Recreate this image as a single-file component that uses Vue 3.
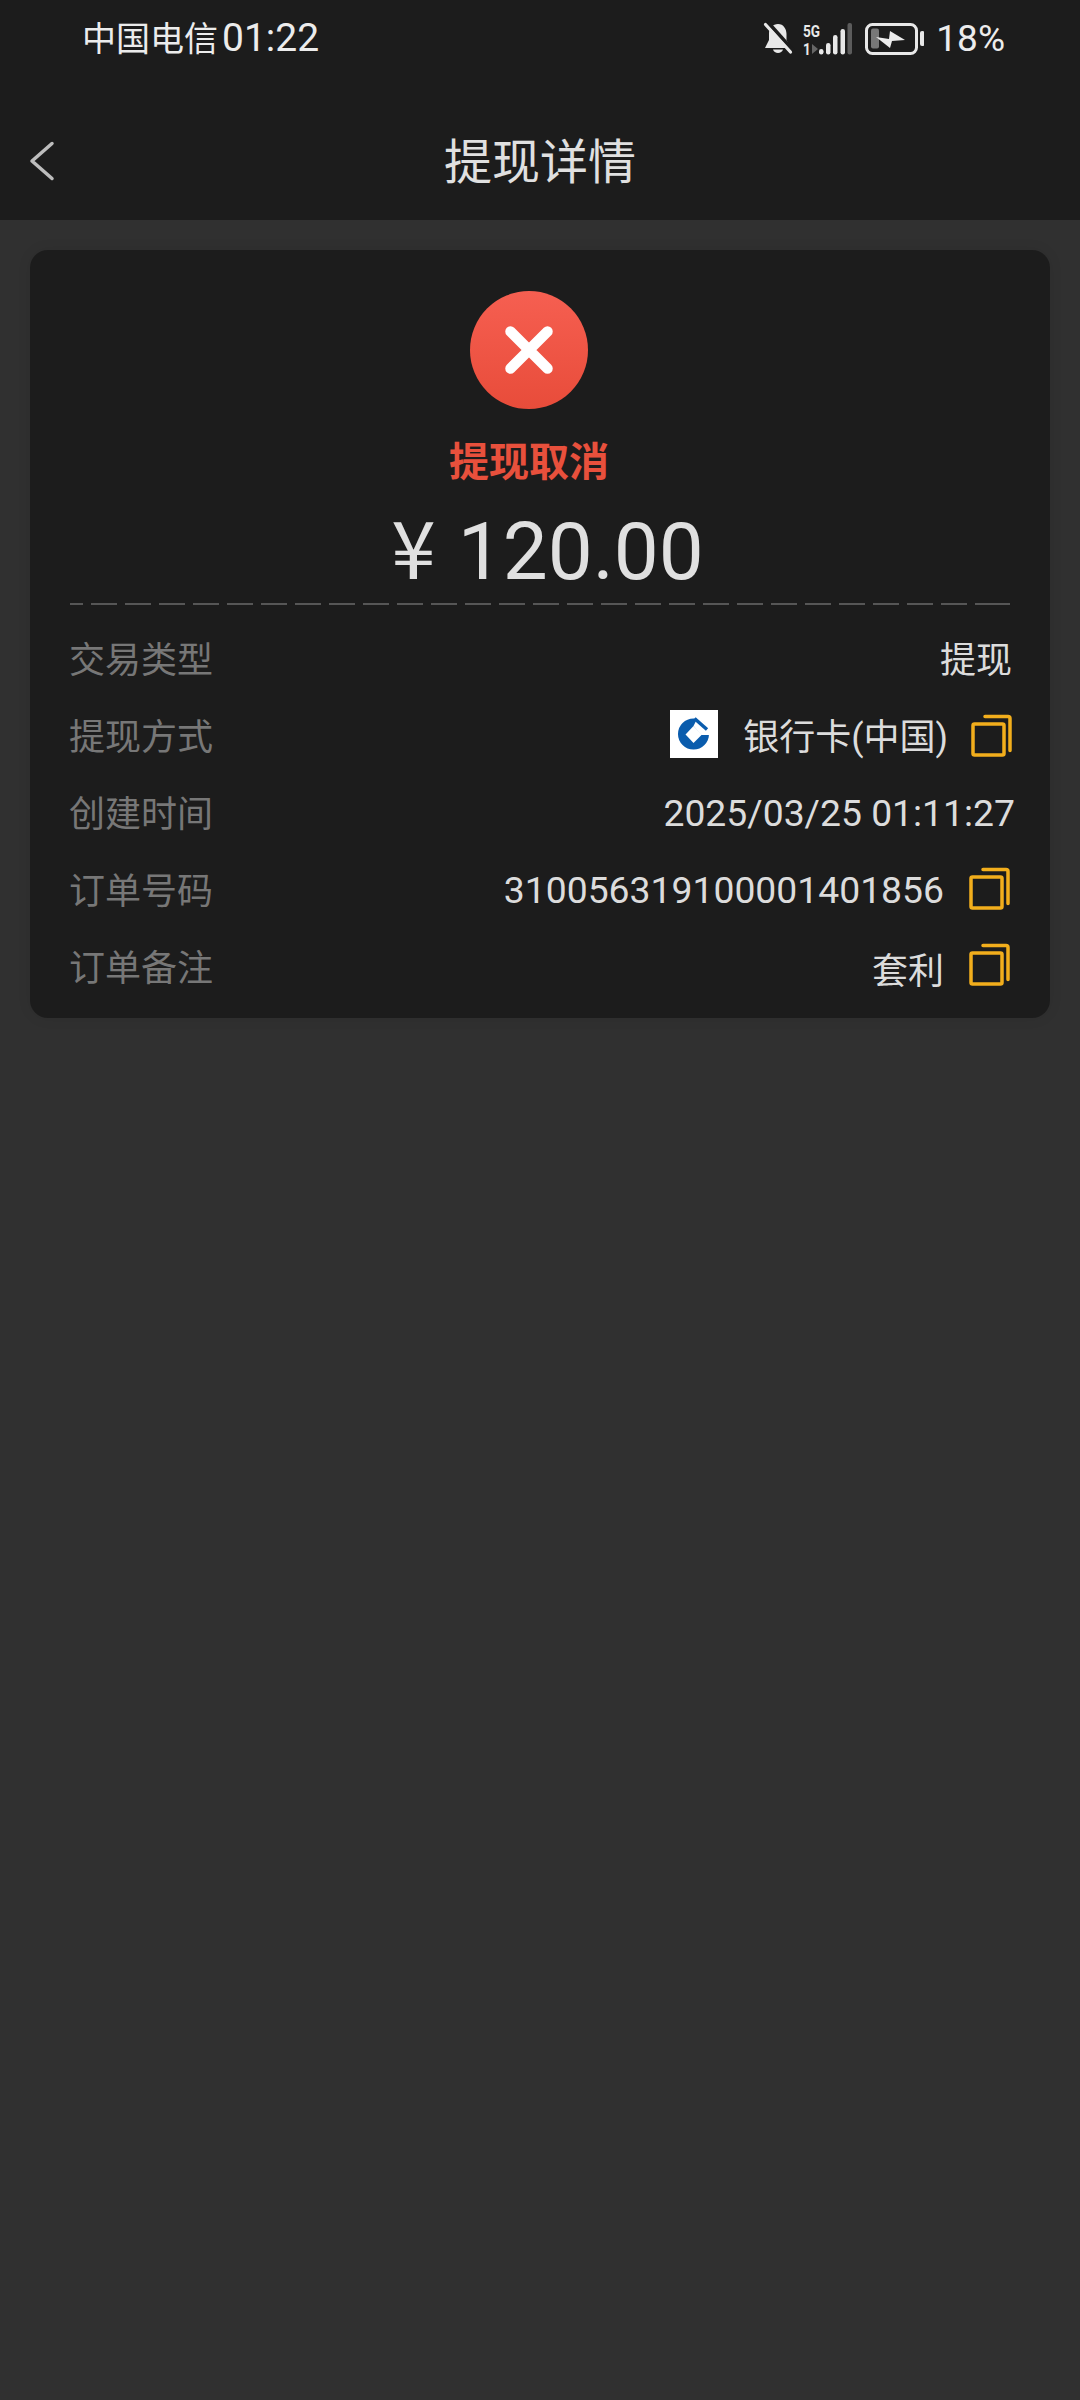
<template>
  <div class="page">
    <header class="top">
      <div class="status-bar">
        <div class="carrier">中国电信<span class="clock">01:22</span></div>
        <div class="status-right">
          <svg class="status-icons" width="162" height="44" viewBox="0 0 162 44">
            <!-- muted bell -->
            <path d="M16 8c5.500 0 8.500 5 8.500 10v6l4 8H3l4-8v-7c0-5 4-9 9-9z" fill="#e8e8e8" />
            <path d="M11 33.500c1 4.500 9 4.500 10 0z" fill="#e8e8e8" />
            <path d="M6 6.500l25 28" stroke="#1c1c1c" stroke-width="4" />
            <path d="M3.500 8.500l25 27.500" stroke="#e8e8e8" stroke-width="3.200" stroke-linecap="round" />
            <!-- network -->
            <text class="net" transform="translate(41 21) scale(.8 1)" x="0" y="0">5G</text>
            <text class="net" transform="translate(41 38.500) scale(.8 1)" x="0" y="0">1</text>
            <path d="M50 28l6 5-6 5z" fill="#666" />
            <rect x="57" y="33" width="4.500" height="5.500" rx="2.200" fill="#e8e8e8" />
            <rect x="64" y="27" width="4.500" height="11.500" rx="2.200" fill="#e8e8e8" />
            <rect x="71" y="19" width="4.500" height="19.500" rx="2.200" fill="#e8e8e8" />
            <rect x="78.500" y="13" width="4.500" height="25.500" rx="2.200" fill="#e8e8e8" />
            <rect x="85.500" y="7" width="4.500" height="31.500" rx="2" fill="#5c5c5c" />
            <!-- battery charging -->
            <rect x="104.500" y="8.500" width="50" height="29" rx="6" fill="none" stroke="#e8e8e8" stroke-width="3" />
            <rect x="109" y="12.500" width="8" height="20" rx="2" fill="#777" />
            <path d="M114 21l13 2 1-8 15 9-13 1-2 7z" fill="#ececec" />
            <rect x="158" y="15" width="4.500" height="15" rx="2" fill="#e8e8e8" />
          </svg>
          <span class="battery">18%</span>
        </div>
      </div>
      <nav class="nav">
        <svg class="back" width="28" height="40" viewBox="0 0 28 40">
          <path d="M24 2.500L4 20l20 17.500" fill="none" stroke="#bdbdbd" stroke-width="3.500" stroke-linecap="round" stroke-linejoin="round" />
        </svg>
        <h1 class="title">提现详情</h1>
      </nav>
    </header>

    <section class="card">
      <div class="result-icon">
        <svg width="48" height="48" viewBox="0 0 48 48">
          <path d="M5.500 5.500l37 37M42.500 5.500l-37 37" stroke="#fff" stroke-width="10.500" stroke-linecap="round" />
        </svg>
      </div>
      <div class="result-text">提现取消</div>
      <div class="amount"><span class="yen">¥</span>120.00</div>
      <div class="dash"></div>

      <div v-for="row in rows" :key="row.label" class="row">
        <span class="label">{{ row.label }}</span>
        <span class="value">
          <!-- bank logo -->
          <svg v-if="row.bank" class="bank" width="48" height="48" viewBox="0 0 48 48">
            <rect width="48" height="48" fill="#fff" />
            <circle cx="23.500" cy="24" r="15.500" fill="#0a5cad" />
            <path d="M23.500 16L28 7l14 12v6H31.500z" fill="#fff" />
            <path d="M24.500 8.500L37 19.500" stroke="#0a5cad" stroke-width="3.500" />
            <path d="M23.500 16l8.500 8.500-8.500 8.500-8-8.500z" fill="#fff" />
          </svg>
          <span class="value-text" :class="row.cls">{{ row.value }}</span>
          <svg v-if="row.copy" class="copy" :class="row.copyCls" width="41" height="43" viewBox="0 0 41 43">
            <rect x="2" y="10" width="31" height="31" rx="1.500" fill="none" stroke="#f2ae1c" stroke-width="3.500" />
            <path d="M14 2.500h23a2 2 0 0 1 2 2v32" fill="none" stroke="#f2ae1c" stroke-width="3.500" stroke-linecap="round" />
          </svg>
        </span>
      </div>
    </section>
  </div>
</template>

<script setup>
const rows = [
  { label: "交易类型", value: "提现", cls: "type" },
  { label: "提现方式", value: "银行卡(中国)", bank: true, copy: true, copyCls: "copy-bank" },
  { label: "创建时间", value: "2025/03/25 01:11:27", cls: "num date" },
  { label: "订单号码", value: "310056319100001401856", cls: "num", copy: true },
  { label: "订单备注", value: "套利", copy: true, cls: "low", copyCls: "copy-low" },
];
</script>

<style>
html,
body {
  margin: 0;
  background: #303030;
}
</style>

<style scoped>
.page {
  min-height: 2400px;
  background: #303030;
  color: #e2e2e2;
  font-family: Roboto, "Noto Sans CJK SC", sans-serif;
  overflow: hidden;
}

.top {
  background: #1c1c1c;
  height: 220px;
}

.status-bar {
  height: 76px;
  box-sizing: border-box;
  padding: 0 75px 0 82px;
  display: flex;
  align-items: center;
  justify-content: space-between;
  color: #ececec;
}

.carrier {
  font-size: 34px;
  line-height: 76px;
}

.clock {
  font-size: 39px;
  margin-left: 4px;
}

.status-right {
  display: flex;
  align-items: center;
}

.status-icons {
  display: block;
  margin-right: 12px;
}

.net {
  fill: #e8e8e8;
  font-size: 17px;
  font-weight: 700;
}

.battery {
  font-size: 37px;
}

.nav {
  height: 144px;
  display: flex;
  justify-content: center;
  position: relative;
}

.back {
  position: absolute;
  left: 28px;
  top: 65px;
}

.title {
  margin: 57px 0 0;
  font-size: 48px;
  line-height: 60px;
  font-weight: 400;
  color: #e0e0e0;
}

.card {
  margin: 30px 30px 0;
  height: 768px;
  box-sizing: border-box;
  padding: 41px 40px 0;
  background: #1c1c1c;
  border-radius: 18px;
  box-shadow: 0 0 14px rgba(0, 0, 0, 0.08);
  display: flex;
  flex-direction: column;
}

.result-icon {
  width: 118px;
  height: 118px;
  border-radius: 50%;
  align-self: center;
  margin-right: 22px;
  background: linear-gradient(#f65f51, #e84c3a);
  display: flex;
  align-items: center;
  justify-content: center;
}

.result-text {
  margin-top: 24px;
  padding-right: 22px;
  text-align: center;
  font-size: 40px;
  line-height: 60px;
  font-weight: 700;
  color: #e8503c;
}

.amount {
  margin-top: 6px;
  height: 90px;
  padding-left: 15px;
  text-align: center;
  font-size: 80px;
  line-height: 90px;
  font-weight: 400;
  color: #e0e0e0;
}

.yen {
  font-family: "Noto Sans CJK SC", sans-serif;
  margin-right: 22px;
}

.dash {
  height: 2px;
  margin-top: 14px;
  margin-bottom: 13px;
  flex: none;
  background: repeating-linear-gradient(90deg, #565656 0 26px, transparent 26px 34px);
  background-position: -13px 0;
}

.row {
  height: 77px;
  flex: none;
  display: flex;
  align-items: center;
  justify-content: space-between;
  font-size: 36px;
}

.label {
  color: #777;
  margin-left: -1px;
}

.value {
  display: flex;
  align-items: center;
  color: #dcdcdc;
}

.bank {
  display: block;
  margin-right: 25px;
}

.value-text.type {
  margin-right: -2px;
}

.value-text.num {
  font-size: 37.300px;
  position: relative;
  top: 2px;
}

.value-text.date {
  margin-right: -5px;
}

.value-text.low {
  position: relative;
  top: 3px;
}

.copy {
  display: block;
  margin-left: 25px;
  position: relative;
  top: 1px;
}

.copy-bank {
  margin-left: 23px;
  margin-right: -2px;
  top: 2px;
}

.copy-low {
  top: 0;
}
</style>
